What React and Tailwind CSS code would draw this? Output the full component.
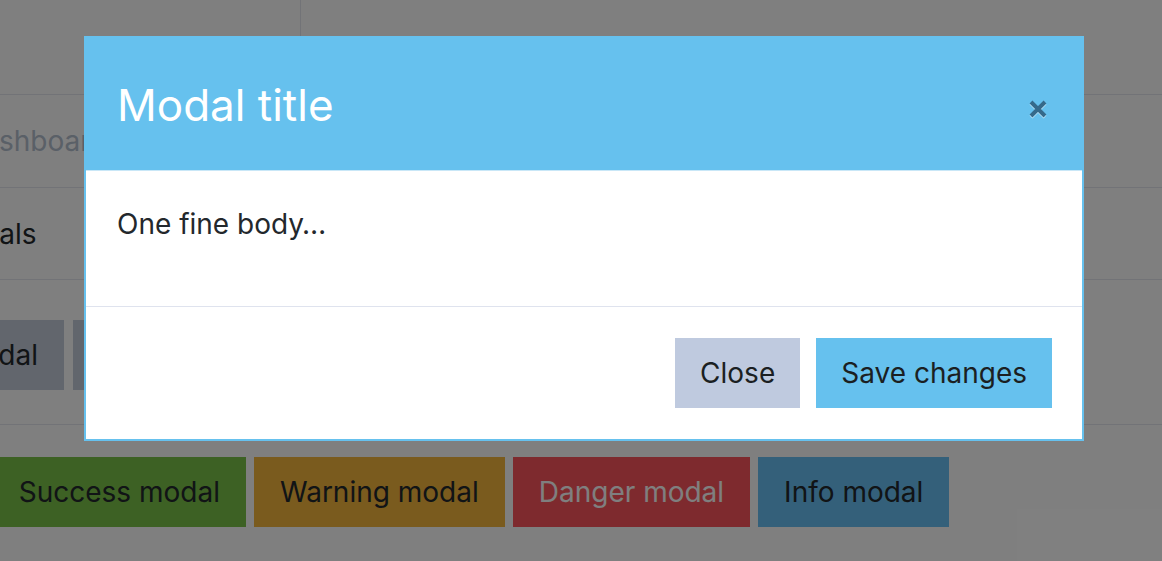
export default function App() {
  const font = { fontFamily: "Inter, 'Noto Sans', sans-serif" };

  return (
    <div className="relative w-[1162px] h-[561px] overflow-hidden bg-white text-[#23282c]" style={font}>
      {/* page behind the backdrop */}
      <div className="flex flex-col">
        <div className="h-[95px] border-b border-[#e4e7ef] flex">
          <div className="w-[301px] h-full border-r border-[#e4e7ef]" />
        </div>
        <div className="h-[93px] border-b border-[#e4e7ef] flex items-center">
          <span className="-ml-[37px] text-[28px] text-[#b4c0cf] whitespace-nowrap">Dashboard</span>
        </div>
        <div className="h-[92px] border-b border-[#e4e7ef] flex items-center">
          <span className="-ml-[60px] text-[28px] whitespace-nowrap">Modals</span>
        </div>
        <div className="h-[145px] border-b border-[#e4e7ef] pt-[40px] flex gap-[9px]">
          <div className="w-[64px] h-[70px] overflow-hidden flex justify-end shrink-0">
            <div className="shrink-0 h-[70px] px-[26px] flex items-center bg-[#c4ccda] text-[28px] whitespace-nowrap">
              Launch demo modal
            </div>
          </div>
          <div className="shrink-0 h-[70px] px-[26px] flex items-center bg-[#c4ccda] text-[28px] whitespace-nowrap">
            Launch large modal
          </div>
        </div>
        <div className="pt-[32px] flex gap-[8px]">
          <div className="w-[246px] h-[70px] overflow-hidden flex justify-end shrink-0">
            <div className="shrink-0 h-[70px] px-[26px] flex items-center bg-[#7ac248] text-[28px] whitespace-nowrap">
              Success modal
            </div>
          </div>
          <div className="shrink-0 h-[70px] px-[26px] flex items-center bg-[#f4b63c] text-[28px] whitespace-nowrap">
            Warning modal
          </div>
          <div className="shrink-0 h-[70px] px-[26px] flex items-center bg-[#fc545c] text-white text-[28px] whitespace-nowrap">
            Danger modal
          </div>
          <div className="shrink-0 h-[70px] px-[26px] flex items-center bg-[#68c0f4] text-[28px] whitespace-nowrap">
            Info modal
          </div>
        </div>
      </div>

      {/* backdrop */}
      <div className="absolute inset-0 bg-black/50" />

      {/* modal */}
      <div className="absolute inset-0 pt-[36px] pl-[84px]">
        <div className="w-[1000px] border-2 border-[#66c1ee] bg-white">
          <div className="h-[133px] bg-[#66c1ee] border-b border-[#c9e7f7] pl-[31px] pr-[33px] flex items-center justify-between">
            <h5 className="text-[44px] text-white font-normal leading-none pt-[2px]">Modal title</h5>
            <button className="w-[22px] h-[22px] mt-[9px] flex items-center justify-center">
              <svg width="22" height="22" viewBox="0 0 22 22">
                <path d="M4 5 L18 19 M18 5 L4 19" stroke="#ffffff" strokeOpacity="0.6" strokeWidth="4" />
                <path d="M4 4 L18 18 M18 4 L4 18" stroke="#356a8b" strokeWidth="4" />
              </svg>
            </button>
          </div>
          <div className="h-[136px] border-b border-[#dfe3ee] px-[31px] pt-[32px]">
            <p className="text-[28px] leading-[42px] text-[#23282c]">One fine body…</p>
          </div>
          <div className="h-[132px] pt-[31px] pr-[30px] flex justify-end gap-[16px]">
            <button className="h-[70px] px-[25px] bg-[#bfcadf] text-[28px] text-[#1b1f22]">Close</button>
            <button className="h-[70px] px-[25px] bg-[#66c1ee] text-[28px] text-[#1b1f22]">Save changes</button>
          </div>
        </div>
      </div>
    </div>
  );
}
